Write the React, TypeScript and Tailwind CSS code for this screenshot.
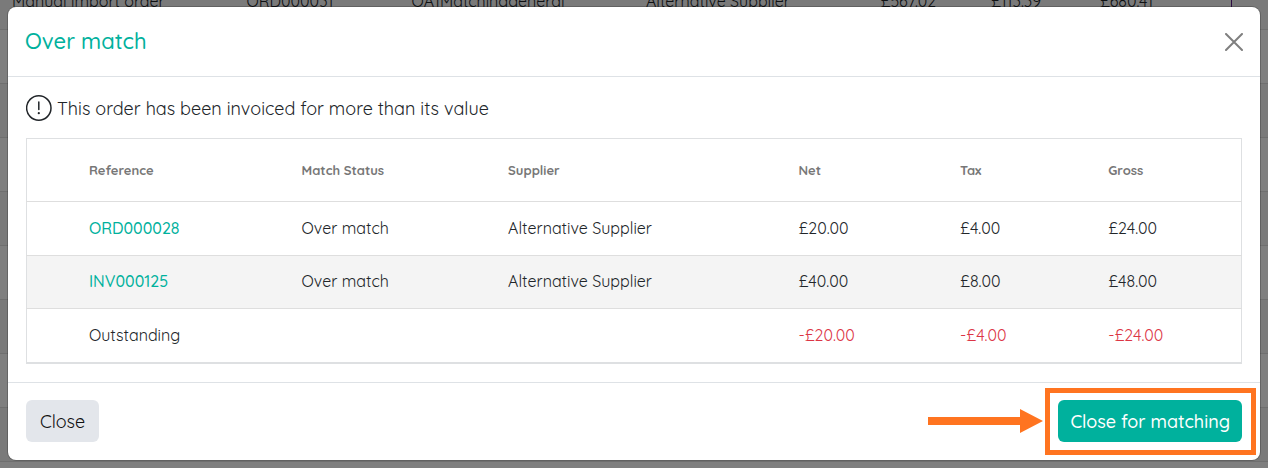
import { useState } from "react";
import clsx from "clsx";

interface MatchRow {
  reference: string;
  status: string;
  supplier: string;
  net: string;
  tax: string;
  gross: string;
}

const rows: MatchRow[] = [
  { reference: "ORD000028", status: "Over match", supplier: "Alternative Supplier", net: "£20.00", tax: "£4.00", gross: "£24.00" },
  { reference: "INV000125", status: "Over match", supplier: "Alternative Supplier", net: "£40.00", tax: "£8.00", gross: "£48.00" },
];

const outstanding = { net: "-£20.00", tax: "-£4.00", gross: "-£24.00" };

const orders = [
  ["Manual import order", "ORD000031", "QA1Matchinggeneral", "Alternative Supplier", "£567.02", "£113.39", "£680.41"],
  ...Array.from({ length: 9 }, () => ["", "", "", "", "", "", ""]),
];

function OrdersBackground() {
  return (
    <table aria-hidden="true" className="-mt-[25px] w-full table-fixed text-[16px] text-[#212529]">
      <colgroup>
        <col className="w-[18.5%]" />
        <col className="w-[13%]" />
        <col className="w-[18.5%]" />
        <col className="w-[18.5%]" />
        <col className="w-[8.7%]" />
        <col className="w-[8.6%]" />
        <col className="w-[11.3%]" />
        <col />
      </colgroup>
      <tbody>
        {orders.map((cells, i) => (
          <tr key={i} className="h-[54px] border-b border-[#dedede] odd:bg-[#f4f4f4]">
            {cells.map((cell, j) => (
              <td key={j} className="whitespace-nowrap pb-0.5 pl-3">{cell}</td>
            ))}
            <td>{i === 0 && <span className="block h-8 border-l border-[#5b1a86]" />}</td>
          </tr>
        ))}
      </tbody>
    </table>
  );
}

function Callout() {
  return (
    <>
      <span className="pointer-events-none absolute -bottom-[13px] -left-[13px] -right-[14px] -top-[12px] border-5 border-[#ff7420]" />
      <svg
        className="pointer-events-none absolute right-full top-1/2 mr-[15px] h-6 w-[115px] -translate-y-1/2"
        viewBox="0 0 115 24"
        fill="#ff7420"
        aria-hidden="true"
      >
        <path d="M0 8H92V0L115 12L92 24V16H0Z" />
      </svg>
    </>
  );
}

export default function App() {
  const [open, setOpen] = useState(true);
  const close = () => setOpen(false);

  return (
    <main className="relative h-screen overflow-hidden bg-white font-['Quicksand','Lato',sans-serif]">
      <OrdersBackground />

      {open && (
        <div className="absolute inset-0 overflow-hidden bg-black/50 px-2 pt-[7px]">
          <div
            role="dialog"
            aria-modal="true"
            aria-labelledby="dialog-title"
            className="rounded-lg bg-white text-[#212529] ring-1 ring-black/20"
          >
            <header className="flex h-[70px] items-center justify-between border-b border-[#dee2e6] px-[17px]">
              <h1 id="dialog-title" className="text-[22px] font-medium text-[#00b19d]">Over match</h1>
              <button type="button" aria-label="Close dialog" onClick={close} className="text-[#7f7f7f]">
                <svg className="size-[18px]" viewBox="0 0 18 18" fill="none" stroke="currentColor" strokeWidth="2" strokeLinecap="round" aria-hidden="true">
                  <path d="M1 1L17 17M17 1L1 17" />
                </svg>
              </button>
            </header>

            <div className="p-[18px]">
              <p className="mb-[17px] flex h-[26px] items-center gap-[5px] text-[18px]">
                <svg className="size-[26px] shrink-0" viewBox="0 0 26 26" fill="none" stroke="currentColor" strokeWidth="1.5" aria-hidden="true">
                  <circle cx="12.8" cy="13" r="12.2" />
                  <path d="M12.8 7V14.4" strokeLinecap="round" />
                  <circle cx="12.8" cy="18.2" r="1.1" fill="currentColor" stroke="none" />
                </svg>
                This order has been invoiced for more than its value
              </p>

              <table className="w-full table-fixed border border-b-2 border-[#dee0e2] text-left text-[16px]">
                <colgroup>
                  <col className="w-[3%]" />
                  <col className="w-[17.5%]" />
                  <col className="w-[17%]" />
                  <col className="w-[23.9%]" />
                  <col className="w-[13.3%]" />
                  <col className="w-[12.2%]" />
                  <col />
                </colgroup>
                <thead className="text-[13px] text-[#777777]">
                  <tr className="h-[63px] border-b border-[#dedede]">
                    <td />
                    {["Reference", "Match Status", "Supplier", "Net", "Tax", "Gross"].map((label) => (
                      <th key={label} scope="col" className="pl-[26px] pt-0.5 font-bold">{label}</th>
                    ))}
                  </tr>
                </thead>
                <tbody>
                  {rows.map((row, i) => (
                    <tr key={row.reference} className={clsx("border-b border-[#dedede]", i % 2 === 1 ? "h-[53px] bg-[#f4f4f4]" : "h-[54px]")}>
                      <td />
                      <td className="pb-0.5 pl-[26px]">
                        <a href={`#${row.reference}`} className="font-medium text-[#00b19d]">{row.reference}</a>
                      </td>
                      <td className="pb-0.5 pl-[26px]">{row.status}</td>
                      <td className="pb-0.5 pl-[26px]">{row.supplier}</td>
                      <td className="pb-0.5 pl-[26px]">{row.net}</td>
                      <td className="pb-0.5 pl-[26px]">{row.tax}</td>
                      <td className="pb-0.5 pl-[26px]">{row.gross}</td>
                    </tr>
                  ))}
                  <tr className="h-[54px] text-[#dc3545]">
                    <td />
                    <td className="pl-[26px] text-[#212529]">Outstanding</td>
                    <td />
                    <td />
                    <td className="pl-[26px]">{outstanding.net}</td>
                    <td className="pl-[26px]">{outstanding.tax}</td>
                    <td className="pl-[26px]">{outstanding.gross}</td>
                  </tr>
                </tbody>
              </table>
            </div>

            <footer className="flex items-center justify-between border-t border-[#dee2e6] px-[18px] pb-[18px] pt-[17px]">
              <button type="button" onClick={close} className="h-[42px] rounded-md bg-[#e3e6eb] px-3.5 pt-0.5 text-[18px] text-[#111111]">
                Close
              </button>
              <div className="relative">
                <button type="button" onClick={close} className="h-[42px] rounded-md bg-[#00b19d] px-3 pt-0.5 text-[18px] font-medium text-white">
                  Close for matching
                </button>
                <Callout />
              </div>
            </footer>
          </div>
        </div>
      )}
    </main>
  );
}
